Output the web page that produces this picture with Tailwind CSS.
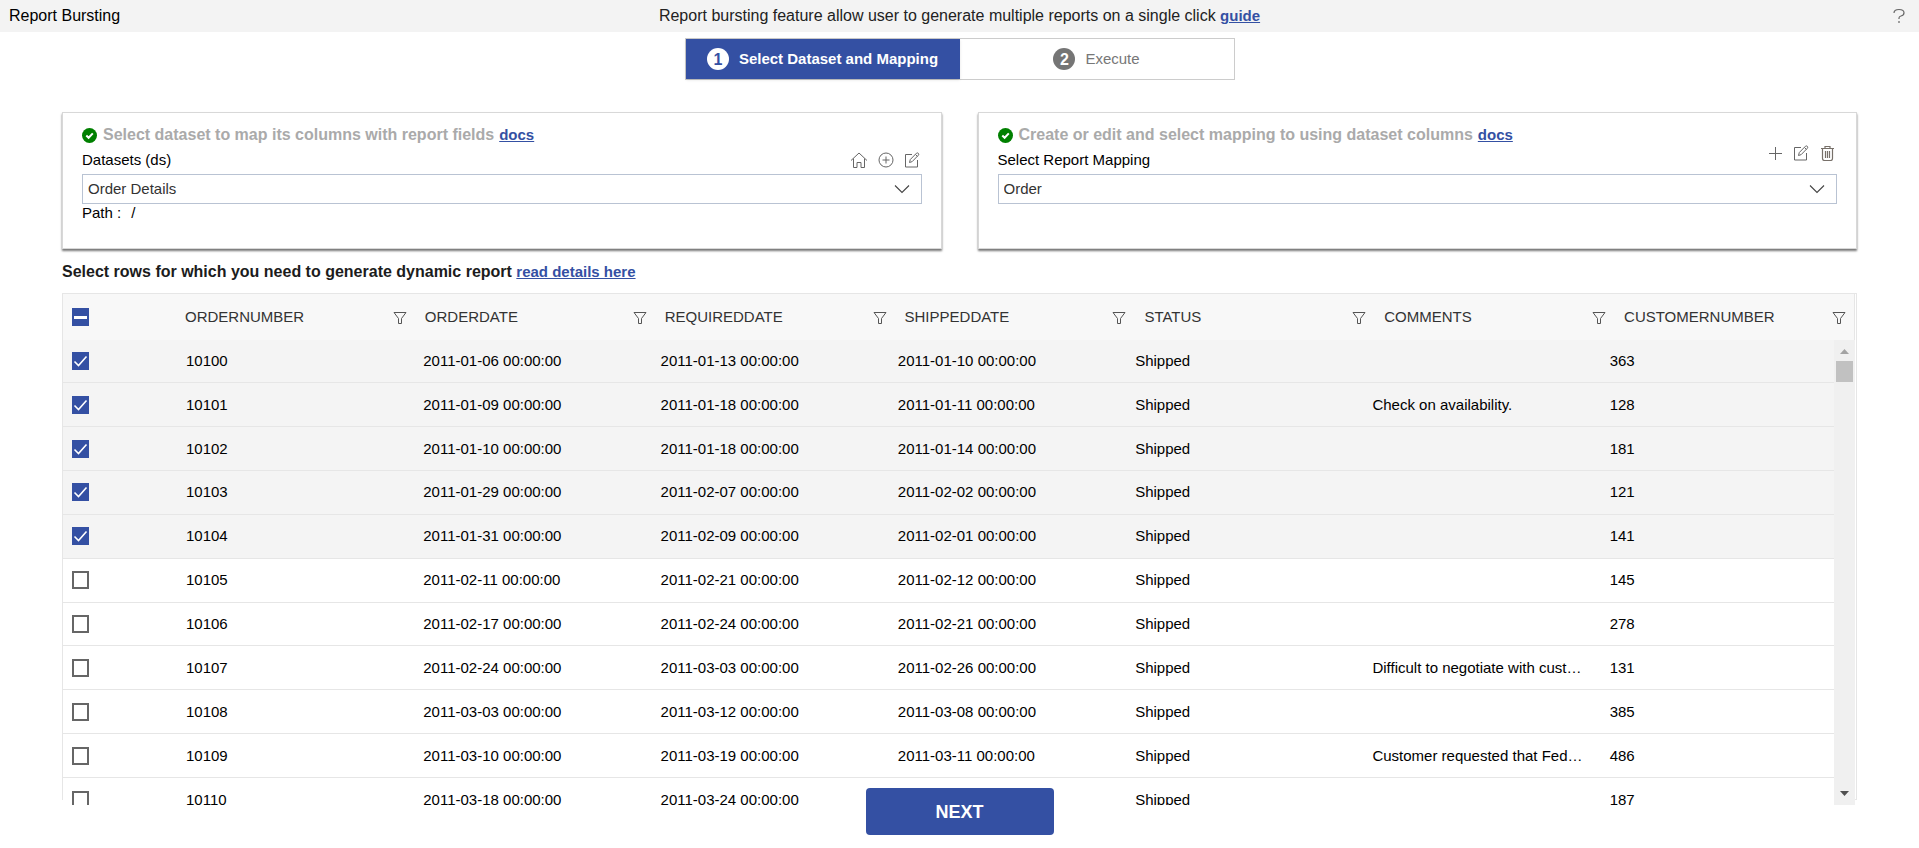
<!DOCTYPE html>
<html lang="en">
<head>
<meta charset="utf-8">
<title>Report Bursting</title>
<script src="https://cdn.jsdelivr.net/npm/@tailwindcss/browser@4"></script>
</head>
<body class="bg-white text-[15px] leading-5 text-black" style="font-family:'Liberation Sans',Arial,sans-serif">
<svg class="hidden" aria-hidden="true">
  <symbol id="check-circle" viewBox="0 0 15 15"><circle cx="7.500" cy="7.500" r="7.500" fill="#008000"/><path d="M4.300 7.500l2.300 2.300 4.200-4.400" fill="none" stroke="#fff" stroke-width="2"/></symbol>
  <symbol id="home" viewBox="0 0 18 16"><path d="M1 8.500L9 1l8 7.500M3.500 6.500v9h3.500v-5h4v5h3.500v-9" fill="none" stroke="#666" stroke-linejoin="round"/></symbol>
  <symbol id="add-circle" viewBox="0 0 16 16"><path d="M8 4.500v7M4.500 8h7" stroke="#666"/><circle cx="8" cy="8" r="7" fill="none" stroke="#666"/></symbol>
  <symbol id="edit" viewBox="0 0 16 16"><path d="M8 2.500H1.500v12.500h12V8M5.500 10.500l.8-3 6.200-6.300q.9-.7 1.800.1.900.9.1 1.900L8.200 9.600zM11.500 2.500l2 2" fill="none" stroke="#666" stroke-linejoin="round"/></symbol>
  <symbol id="plus" viewBox="0 0 16 16"><path d="M8.500 2v13M2 8.500h13" stroke="#666"/></symbol>
  <symbol id="trash" viewBox="0 0 16 16"><path d="M2 3.500h13M6 3.500v-2h5v2M3.500 3.500v10q0 2 2 2h6q2 0 2-2v-10M6.500 6v7M8.500 6v7M10.500 6v7" fill="none" stroke="#777069" stroke-width="1.200"/></symbol>
  <symbol id="chevron" viewBox="0 0 16 10"><path d="M1 1.500l7 7 7-7" fill="none" stroke="#444" stroke-width="1.100"/></symbol>
  <symbol id="filter" viewBox="0 0 14 14"><path d="M1 1.500h12L8.500 7.500v5h-3v-5z" fill="none" stroke="#555" stroke-linejoin="round"/></symbol>
  <symbol id="tick" viewBox="0 0 17 18"><path d="M2.500 9.500l4 4 8-9" fill="none" stroke="#fff" stroke-width="1.600"/></symbol>
</svg>

<div class="flex h-screen flex-col">
  <header class="grid h-8 shrink-0 grid-cols-[1fr_auto_1fr] items-center bg-[#f3f3f3] px-2 text-base">
    <h1 class="pl-px">Report Bursting</h1>
    <p class="text-[#222]">Report bursting feature allow user to generate multiple reports on a single click <a href="#guide" class="text-[15px] font-bold text-[#3450a3] underline">guide</a></p>
    <button type="button" aria-label="Help" class="mr-1.5 justify-self-end">
      <svg class="block h-4 w-3" viewBox="0 0 12 16" fill="none" stroke="#666" stroke-width="1.200"><path d="M1 5Q1 1.500 6 1.500t5 3.300Q11 7.500 8 8 6 8.400 6 10v1M6 13v2"/></svg>
    </button>
  </header>

  <nav aria-label="Steps" class="mx-auto mt-1.5 grid h-[42px] w-[550px] shrink-0 grid-cols-2 border border-[#ccc]">
    <button type="button" aria-current="step" class="flex items-center justify-center gap-2.5 bg-[#3450a3] font-bold text-white shadow-sm">
      <span class="grid size-[22px] place-items-center rounded-full bg-white text-base text-[#3450a3]">1</span>Select Dataset and Mapping
    </button>
    <button type="button" class="flex items-center justify-center gap-2.5 text-[#777]">
      <span class="grid size-[22px] place-items-center rounded-full bg-[#757575] text-base font-bold text-white">2</span>Execute
    </button>
  </nav>

  <main class="flex min-h-0 flex-1 flex-col px-[62px] pt-8">
    <div class="grid shrink-0 grid-cols-2 gap-9">
      <section class="h-[137px] border border-[#d8d8d8] px-[19px] pt-3 shadow-[0_2px_2px_#777]">
        <h2 class="flex items-center text-base leading-5 font-bold text-[#aaa]"><svg class="mr-1.5 size-[15px]"><use href="#check-circle"/></svg>Select dataset to map its columns with report fields<a href="#docs" class="ml-[5px] text-[15px] text-[#3450a3] underline">docs</a></h2>
        <div class="flex h-[29px] items-center">
          <label for="dataset" class="flex-1">Datasets (ds)</label>
          <div class="mr-0.5 flex gap-2.5">
            <button type="button" aria-label="Home"><svg class="block h-4 w-[18px]"><use href="#home"/></svg></button>
            <button type="button" aria-label="Add dataset"><svg class="block size-4"><use href="#add-circle"/></svg></button>
            <button type="button" aria-label="Edit dataset"><svg class="block size-4"><use href="#edit"/></svg></button>
          </div>
        </div>
        <div class="relative">
          <select id="dataset" class="block h-[30px] w-full appearance-none border border-[#b9c3d3] bg-white px-[5px] text-[#333]"><option>Order Details</option></select>
          <svg class="pointer-events-none absolute top-2.5 right-3 h-2.5 w-4"><use href="#chevron"/></svg>
        </div>
        <p class="flex gap-2.5 leading-[18px]">Path :<span>/</span></p>
      </section>
      <section class="h-[137px] border border-[#d8d8d8] px-[19px] pt-3 shadow-[0_2px_2px_#777]">
        <h2 class="flex items-center text-base leading-5 font-bold text-[#aaa]"><svg class="mr-1.5 size-[15px]"><use href="#check-circle"/></svg>Create or edit and select mapping to using dataset columns<a href="#docs" class="ml-[5px] text-[15px] text-[#3450a3] underline">docs</a></h2>
        <div class="flex h-[29px] items-center">
          <label for="mapping" class="flex-1">Select Report Mapping</label>
          <div class="mr-0.5 flex gap-2.5 self-start">
            <button type="button" aria-label="Add mapping"><svg class="block size-4"><use href="#plus"/></svg></button>
            <button type="button" aria-label="Edit mapping"><svg class="block size-4"><use href="#edit"/></svg></button>
            <button type="button" aria-label="Delete mapping"><svg class="block size-4"><use href="#trash"/></svg></button>
          </div>
        </div>
        <div class="relative">
          <select id="mapping" class="block h-[30px] w-full appearance-none border border-[#b9c3d3] bg-white px-[5px] text-[#333]"><option>Order</option></select>
          <svg class="pointer-events-none absolute top-2.5 right-3 h-2.5 w-4"><use href="#chevron"/></svg>
        </div>
      </section>
    </div>

    <h2 class="mt-[13px] shrink-0 text-base leading-5 font-bold text-[#1c1c1c]">Select rows for which you need to generate dynamic report <a href="#details" class="text-[15px] text-[#3450a3] underline">read details here</a></h2>

    <div class="mt-[11px] flex min-h-0 flex-1 flex-col border border-[#e6e6e6]">
      <div class="mr-px border-r border-[#e6e6e6] bg-[#f8f8f8] pr-0.5">
        <table class="w-full table-fixed text-[#333]">
          <thead><tr id="head" class="h-[46px]">
            <th class="w-[110px] pl-[9px] text-left"><span class="relative block h-[18px] w-[17px]"><input id="all" type="checkbox" aria-label="Select all rows" class="block h-[18px] w-[17px] appearance-none bg-[#3450a3]"><span class="pointer-events-none absolute inset-x-0.5 top-2 h-[3px] bg-white"></span></span></th>
          </tr></thead>
        </table>
      </div>
      <div class="mr-px -mb-[6px] flex min-h-0 flex-1 overflow-hidden bg-white">
        <div class="min-w-0 flex-1 overflow-hidden">
          <table class="h-[482px] w-full table-fixed"><tbody id="rows"></tbody></table>
        </div>
        <div class="flex w-[21px] flex-col items-center bg-[#f0f0f0] py-[9px]">
          <svg class="h-[5px] w-[9px] shrink-0" viewBox="0 0 9 5"><path d="M0 5L4.500 0 9 5z" fill="#a3a3a3"/></svg>
          <div class="mt-[7px] h-[21px] w-[17px] bg-[#c1c1c1]"></div>
          <svg class="mt-auto h-[5px] w-[9px] shrink-0" viewBox="0 0 9 5"><path d="M0 0h9L4.500 5z" fill="#505050"/></svg>
        </div>
      </div>
    </div>
  </main>

  <footer class="z-10 -mt-3 mb-[13px] flex shrink-0 justify-center">
    <button type="button" class="h-[47px] w-[188px] rounded bg-[#3450a3] text-lg font-bold text-white">NEXT</button>
  </footer>
</div>

<script>
const columns = ['ORDERNUMBER','ORDERDATE','REQUIREDDATE','SHIPPEDDATE','STATUS','COMMENTS','CUSTOMERNUMBER'];
document.getElementById('head').insertAdjacentHTML('beforeend', columns.map(c =>
  `<th class="pr-1.5 pl-3 font-normal"><div class="flex items-center justify-between"><span>${c}</span><button type="button" aria-label="Filter ${c}"><svg class="mt-0.5 block size-3.5"><use href="#filter"/></svg></button></div></th>`).join(''));
const orders = [
  [10100,'2011-01-06','2011-01-13','2011-01-10','',363],
  [10101,'2011-01-09','2011-01-18','2011-01-11','Check on availability.',128],
  [10102,'2011-01-10','2011-01-18','2011-01-14','',181],
  [10103,'2011-01-29','2011-02-07','2011-02-02','',121],
  [10104,'2011-01-31','2011-02-09','2011-02-01','',141],
  [10105,'2011-02-11','2011-02-21','2011-02-12','',145],
  [10106,'2011-02-17','2011-02-24','2011-02-21','',278],
  [10107,'2011-02-24','2011-03-03','2011-02-26','Difficult to negotiate with customer.',131],
  [10108,'2011-03-03','2011-03-12','2011-03-08','',385],
  [10109,'2011-03-10','2011-03-19','2011-03-11','Customer requested that FedEx Ground is used.',486],
  [10110,'2011-03-18','2011-03-24','2011-03-20','',187]
];
document.getElementById('rows').innerHTML = orders.map(([id, o, r, s, note, cust], i) => {
  const cells = [id, o + ' 00:00:00', r + ' 00:00:00', s + ' 00:00:00', 'Shipped', note, cust]
    .map(v => `<td class="truncate pr-3 pl-[13px]">${v}</td>`).join('');
  return `<tr class="border-b border-[#e6e6e6] has-checked:bg-[#f4f4f4]"><td class="w-[110px] pl-[9px]"><span class="relative block h-[18px] w-[17px]"><input type="checkbox" aria-label="Select order ${id}" ${i < 5 ? 'checked' : ''} class="peer block h-[18px] w-[17px] appearance-none border-2 border-[#666] checked:border-[#3450a3] checked:bg-[#3450a3]"><svg class="pointer-events-none absolute inset-0 hidden h-[18px] w-[17px] peer-checked:block"><use href="#tick"/></svg></span></td>${cells}</tr>`;
}).join('');
document.getElementById('all').indeterminate = true;
</script>
</body>
</html>
